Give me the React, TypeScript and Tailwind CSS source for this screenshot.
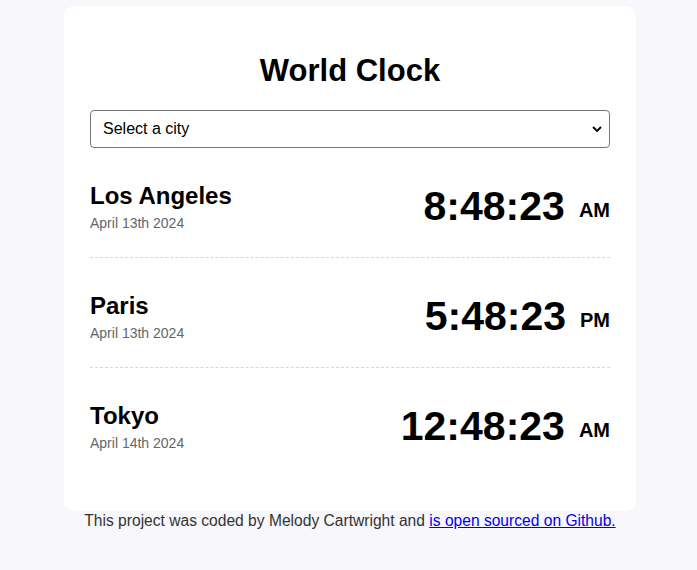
import React from "react";

const cities = [
  { name: "Los Angeles", date: "April 13th 2024", time: "8:48:23", ampm: "AM" },
  { name: "Paris", date: "April 13th 2024", time: "5:48:23", ampm: "PM" },
  { name: "Tokyo", date: "April 14th 2024", time: "12:48:23", ampm: "AM" },
];

export default function App() {
  return (
    <div
      className="min-h-[570px] w-full bg-[#f7f7fc] pt-[6px]"
      style={{ fontFamily: '"Liberation Sans", Arial, sans-serif' }}
    >
      <div className="ml-[64px] w-[572px]">
        <div className="rounded-[10px] bg-white px-[26px] pt-[46px] pb-[33px]">
          <h1 className="text-center text-[31px] font-bold leading-[37px] text-black">World Clock</h1>
          <div className="relative mt-[21px]">
            <select className="h-[38px] w-full appearance-none rounded-[4px] border border-[#767676] bg-white pl-[12px] text-[16px] text-black outline-none">
              <option>Select a city</option>
            </select>
            <svg
              className="pointer-events-none absolute right-[8px] top-[15px]"
              width="10"
              height="8"
              viewBox="0 0 10 8"
            >
              <path d="M1 2 L5 6 L9 2" fill="none" stroke="#000" strokeWidth="1.8" />
            </svg>
          </div>
          <div>
            {cities.map((c, i) => (
              <div
                key={c.name}
                className={
                  "flex h-[110px] items-start justify-between pt-[35px] " +
                  (i < cities.length - 1 ? "border-b border-dashed border-[#d6d6d6]" : "")
                }
              >
                <div className="-mt-[1px]">
                  <div className="text-[24px] font-bold leading-[28px] text-black">{c.name}</div>
                  <div className="mt-[6px] text-[14px] leading-[15px] text-[#666]">{c.date}</div>
                </div>
                <div className="h-[46px] whitespace-nowrap text-[41px] font-bold leading-[46px] text-black">
                  <span>{c.time}</span>
                  <span className="ml-[14px] align-[3px] text-[20px]">{c.ampm}</span>
                </div>
              </div>
            ))}
          </div>
        </div>
        <div className="mt-[1px] text-center text-[15.6px] leading-[18px] text-[#333]">
          This project was coded by Melody Cartwright and{" "}
          <a href="#" className="text-[#0000ee] underline">
            is open sourced on Github.
          </a>
        </div>
      </div>
    </div>
  );
}
